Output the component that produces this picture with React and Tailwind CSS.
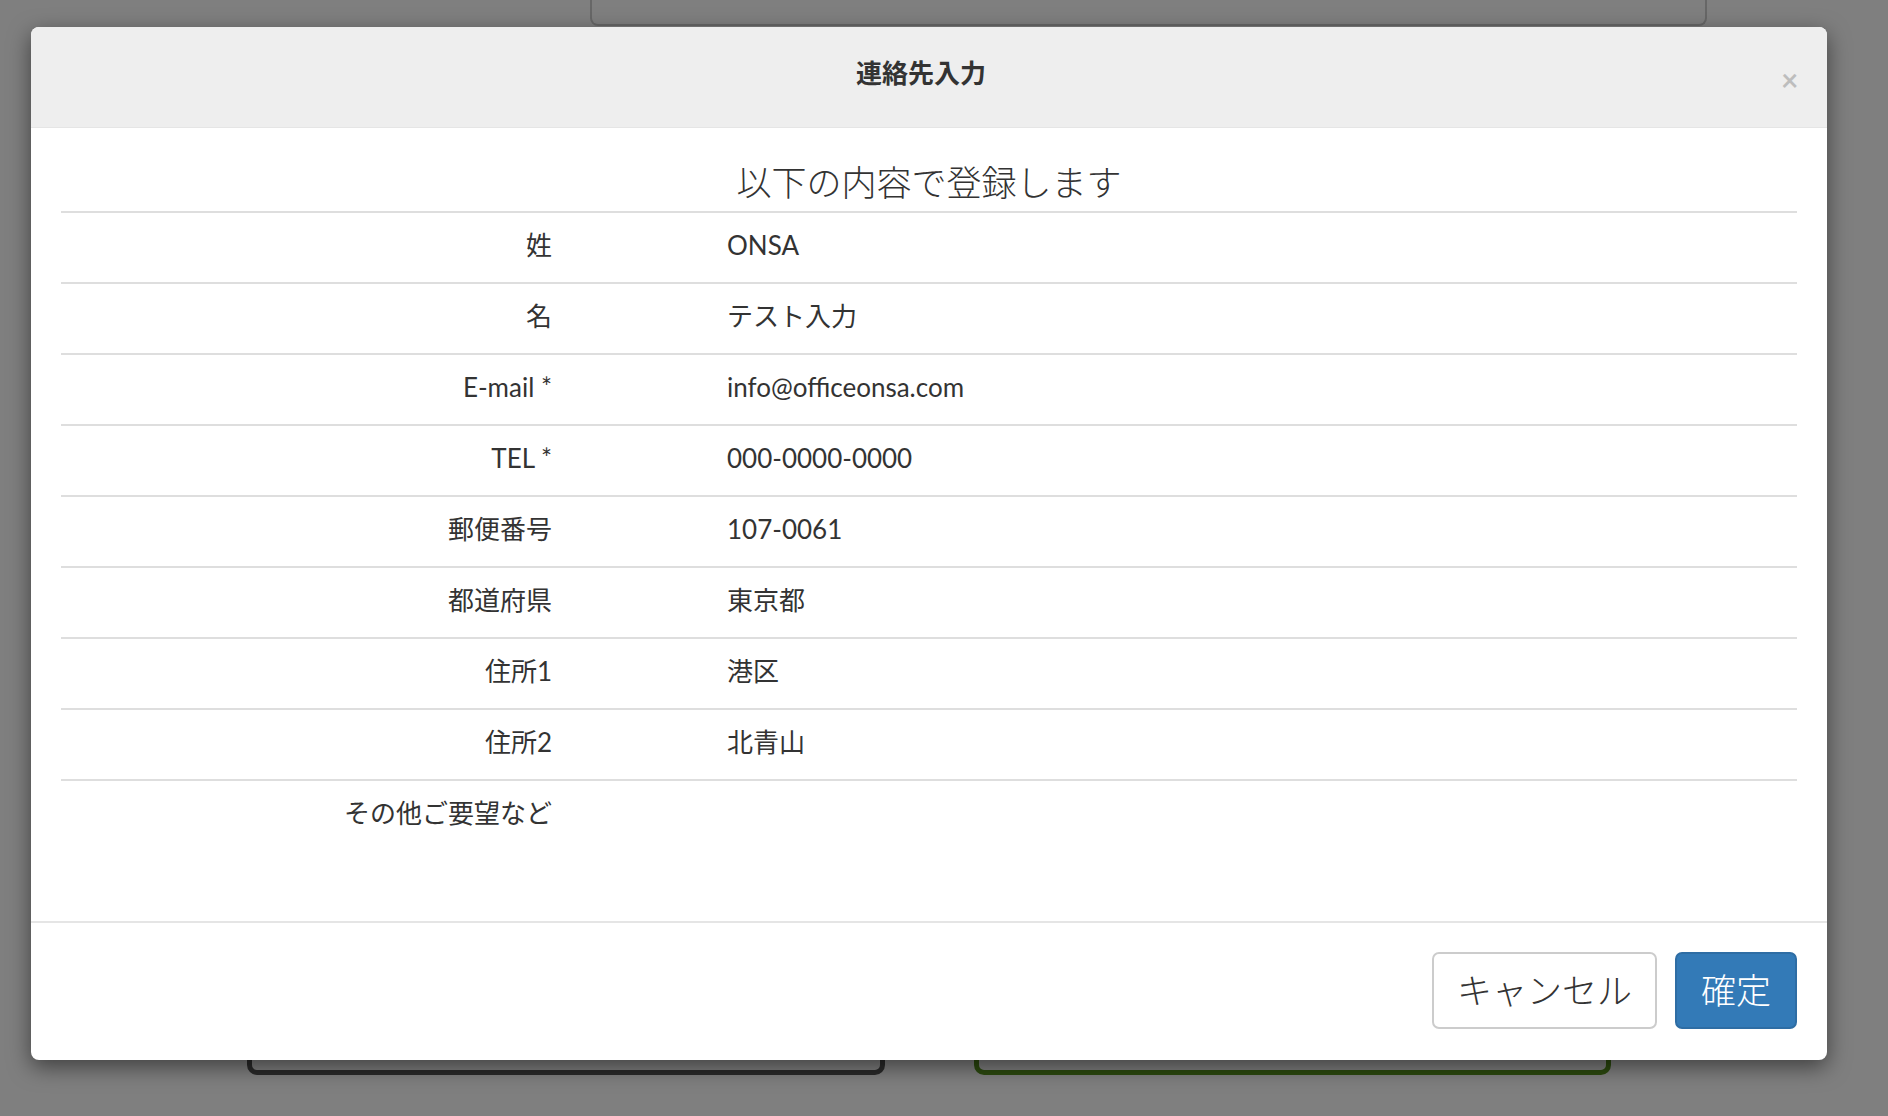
import React from 'react'

const rows = [
    { label: '姓', value: 'ONSA' },
    { label: '名', value: 'テスト入力' },
    { label: 'E-mail *', value: 'info@officeonsa.com' },
    { label: 'TEL *', value: '000-0000-0000' },
    { label: '郵便番号', value: '107-0061' },
    { label: '都道府県', value: '東京都' },
    { label: '住所1', value: '港区' },
    { label: '住所2', value: '北青山' },
    { label: 'その他ご要望など', value: '' },
]

function ConfirmModal() {
    return (
        <div className="ml-[31px] mt-[27px] w-[1796px] rounded-[8px] bg-white shadow-[0_7px_22px_rgba(0,0,0,0.5)] text-[#333]">
            {/* header */}
            <div className="h-[101px] px-[30px] flex items-center bg-[#eeeeee] border-b border-[#e5e5e5] rounded-t-[8px]">
                <h4 className="flex-1 text-center text-[26px] font-bold mb-[7px]">連絡先入力</h4>
                <button className="w-[16px] mt-[4px] text-[30px] leading-none font-bold text-black opacity-20">×</button>
            </div>

            {/* body */}
            <div className="px-[30px] pt-[30px] pb-[71px]">
                <p className="text-center text-[35px] font-light leading-[48px] mb-[5px]">以下の内容で登録します</p>
                <div>
                    {rows.map((row, i) => (
                        <div key={i} className="grid grid-cols-[491px_1fr] h-[71px] items-center border-t-2 border-[#dedede] pb-[4px]">
                            <div className="text-right text-[26px]">{row.label}</div>
                            <div className="pl-[175px] text-[26px]">{row.value}</div>
                        </div>
                    ))}
                </div>
            </div>

            {/* footer */}
            <div className="border-t-2 border-[#e5e5e5] px-[30px] pt-[29px] pb-[31px] flex justify-end gap-[18px]">
                <button className="h-[77px] px-[23px] rounded-[7px] border-2 border-[#cccccc] bg-white text-[35px] font-light text-[#333]">キャンセル</button>
                <button className="h-[77px] px-[24px] rounded-[7px] border-2 border-[#2e6da4] bg-[#337ab7] text-[35px] font-light text-white">確定</button>
            </div>
        </div>
    )
}

export default function App() {
    return (
        <div className="relative w-[1888px] h-[1116px] overflow-hidden bg-white" style={{ fontFamily: '"Lato", "Noto Sans CJK JP", sans-serif' }}>
            {/* page behind the modal */}
            <div className="ml-[590px] w-[1117px] h-[26px] border-x-2 border-b-2 border-[#cfcfcf] rounded-b-[8px]"></div>
            <div className="mt-[987px] ml-[247px] flex gap-[89px]">
                <div className="w-[638px] h-[62px] border-[5px] border-[#555555] rounded-[10px]"></div>
                <div className="w-[637px] h-[62px] border-[5px] border-[#58941f] rounded-[10px]"></div>
            </div>

            {/* backdrop + modal */}
            <div className="absolute inset-0 bg-black/50">
                <ConfirmModal />
            </div>
        </div>
    )
}
